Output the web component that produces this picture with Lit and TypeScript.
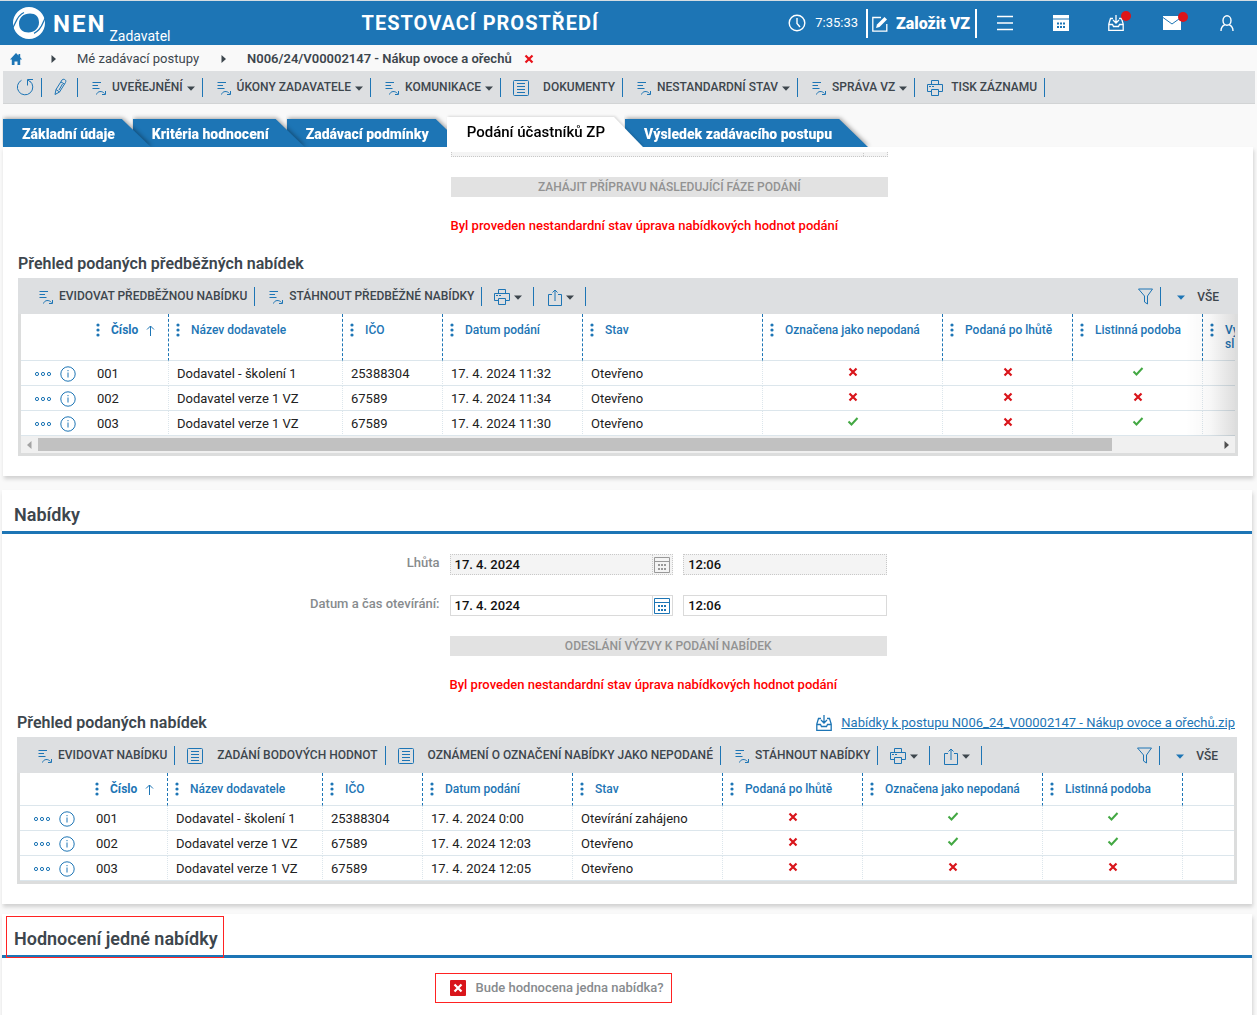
import { LitElement, html, svg, css, nothing } from "lit";
import { customElement, property } from "lit/decorators.js";
import { classMap } from "lit/directives/class-map.js";

type IconName =
  | "process" | "refresh" | "pencil" | "doc" | "printer" | "share" | "filter" | "info" | "dots"
  | "kebab" | "up" | "check" | "cross" | "clock" | "edit" | "menu" | "calendarFull" | "calendar"
  | "inbox" | "mail" | "user" | "home" | "caret" | "right" | "left" | "logo";

const ICONS: Record<IconName, { w: number; h: number; body: unknown }> = {
  process: { w: 14, h: 14, body: svg`<path d="M.5 1.500h8.500M.5 4.500h5.500M.5 7.500h7M4.500 13.500C5.500 10 10 9.500 12.500 12.500M13.500 10v3.500H10" />` },
  refresh: { w: 18, h: 18, body: svg`<path d="M5.500 2.300A7.700 7.700 0 1 0 14 3.200M17 1.500h-5.500v6M12 2l2.500 2" />` },
  pencil: { w: 13, h: 18, body: svg`<path d="M1 16.500l1-5L8 2c1-1.600 5-.5 3.500 2.500L5.500 14zM2 11.500l3.500 2.500M7 4l3.500 2M8.500 6L5 12" />` },
  doc: { w: 16, h: 16, body: svg`<rect x=".5" y=".5" width="15" height="15" rx="1" /><path d="M4 3.500h8M4 6.500h8M4 9.500h8M4 12.500h8" />` },
  printer: { w: 16, h: 16, body: svg`<path d="M4.500 4.500v-4h7v4M4 11.500H.5v-7h15v7H12M4.500 9.500h7v6h-7zM2 6.500h2M5 6.500h2" />` },
  share: { w: 14, h: 17, body: svg`<path d="M4 5.500H.5v11h13v-11H10M7 12V1M4.500 3.500L7 1l2.500 2.500" />` },
  filter: { w: 15, h: 17, body: svg`<path d="M.5 1h14L9.500 8v8l-3-2V8z" />` },
  info: { w: 16, h: 16, body: svg`<circle cx="8" cy="8" r="7.200" /><path d="M8 6.500v5M8 4v1.200" />` },
  dots: { w: 18, h: 6, body: svg`<circle cx="3" cy="3" r="1.600" /><circle cx="9" cy="3" r="1.600" /><circle cx="15" cy="3" r="1.600" />` },
  kebab: { w: 4, h: 14, body: svg`<g fill="currentColor" stroke="none"><circle cx="2" cy="2" r="1.600" /><circle cx="2" cy="7" r="1.600" /><circle cx="2" cy="12" r="1.600" /></g>` },
  up: { w: 9, h: 11, body: svg`<path d="M4.500 11V1M1 4.500L4.500 1 8 4.500" />` },
  check: { w: 12, h: 9, body: svg`<path stroke-width="2" d="M1.500 4.500l3 3L10.500 1" />` },
  cross: { w: 10, h: 10, body: svg`<path stroke-width="2.200" d="M1.500 1.500l7 7M8.500 1.500l-7 7" />` },
  clock: { w: 18, h: 18, body: svg`<circle cx="9" cy="9" r="7.800" stroke-width="1.400" /><path stroke-width="1.400" d="M9 4v5.500l3 3.500" />` },
  edit: { w: 16, h: 16, body: svg`<path stroke-width="1.300" d="M9 1.500H.8v13.700h14V8" /><path fill="currentColor" stroke="none" d="M4 12l1-3.500L12.500 1 15 3.500 7.500 11z" />` },
  menu: { w: 18, h: 16, body: svg`<path stroke-width="1.500" d="M1 1.500h16M1 8h16M1 14.500h16" />` },
  calendarFull: { w: 16, h: 16, body: svg`<path fill="currentColor" stroke="none" d="M0 0h16v3.500H0zM0 4.500h16V16H0z" /><path class="holes" stroke-width="2" d="M4 8.500h2M7 8.500h2M10 8.500h2M4 12h2M7 12h2M10 12h2" />` },
  calendar: { w: 16, h: 16, body: svg`<path d="M.5.500h15v15H.5zM.5 4.500h15" /><path stroke-width="2" stroke-dasharray="2 1" d="M4 8h8M4 12h8" />` },
  inbox: { w: 16, h: 16, body: svg`<path stroke-width="1.300" d="M5 3.500H2.500L.8 9v6.300h14.400V9l-1.700-5.500H11M.8 9.500h3.700l1 2h5l1-2h3.700M8 0v7.500M5 5l3 3 3-3" />` },
  mail: { w: 18, h: 14, body: svg`<path fill="currentColor" stroke="none" d="M0 0h18v14H0z" /><path class="holes" d="M0 1.500l9 6.500 9-6.500" />` },
  user: { w: 14, h: 16, body: svg`<ellipse cx="7" cy="5.500" rx="4" ry="4.800" stroke-width="1.400" /><path stroke-width="1.400" d="M1 16c0-4 2-5.500 4-6.300M13 16c0-4-2-5.500-4-6.300" />` },
  home: { w: 12, h: 12, body: svg`<path fill="currentColor" stroke="none" d="M6 0l2.500 2.500V1h1.700v3.200L12 6.500h-1.800V12H7.500V8.500h-3V12H1.800V6.500H0z" />` },
  caret: { w: 8, h: 5, body: svg`<path fill="currentColor" stroke="none" d="M0 .5h8L4 4.800z" />` },
  right: { w: 5, h: 8, body: svg`<path fill="currentColor" stroke="none" d="M.5 0v8L5 4z" />` },
  left: { w: 5, h: 8, body: svg`<path fill="currentColor" stroke="none" d="M4.500 0v8L0 4z" />` },
  logo: { w: 32, h: 32, body: svg`<path fill="currentColor" stroke="none" fill-rule="evenodd" d="M16 0a16 16 0 1 1 0 32 16 16 0 0 1 0-32zM17 6.500C10.500 6.500 6 10.500 6 16.500S10 25.500 15.500 25.500 26 21.500 26 15.500 22.500 6.500 17 6.500z" /><path class="holes" stroke-width="1.300" d="M-.5 21C3 17 3 9 11 5.500M32.500 10.500C29.500 15 29.500 22.500 21 26.300" />` },
};

@customElement("nen-icon")
export class NenIcon extends LitElement {
  @property() name: IconName = "doc";
  static styles = css`
    :host { display: inline-flex; flex: none; }
    .glyph { display: block; fill: none; stroke: currentColor; overflow: visible; }
    .holes { stroke: #1d75b5; }
  `;
  render() {
    const { w, h, body } = ICONS[this.name];
    return html`<svg class="glyph" width=${w} height=${h} viewBox="0 0 ${w} ${h}" aria-hidden="true">${body}</svg>`;
  }
}

interface Tool { icon: IconName; label?: string; menu?: boolean; hint?: string }

@customElement("nen-tools")
export class NenTools extends LitElement {
  @property({ attribute: false }) tools: Tool[] = [];
  static styles = css`
    :host { display: flex; align-items: center; height: 100%; font-family: Roboto, "Liberation Sans", sans-serif; }
    .tool {
      display: flex; align-items: center; height: 19px; border: 0; border-right: 1px solid #1d75b5;
      background: none; padding: 0 7px 0 14px; font: 500 12px/18px Roboto, "Liberation Sans", sans-serif;
      color: #3d464d; text-transform: uppercase; white-space: nowrap; cursor: pointer;
    }
    .tool.wide { padding-left: 12px; }
    .tool.bare.menu { padding-right: 11px; }
    .glyph { color: #1d75b5; padding-top: 2px; }
    .label { padding: 0 0 0 6px; }
    .label.doc { padding-left: 14px; }
    .label.printer { padding-left: 8px; }
    .caret { margin-left: 4px; padding-top: 2px; }
  `;
  render() {
    return this.tools.map((t) => html`
      <button class=${classMap({ tool: true, wide: t.icon === "doc" || t.icon === "printer", bare: !t.label, menu: !!t.menu })} aria-label=${t.hint ?? nothing}>
        <nen-icon class="glyph" name=${t.icon}></nen-icon>
        ${t.label ? html`<span class="label ${t.icon}">${t.label}</span>` : nothing}
        ${t.menu ? html`<nen-icon class="caret" name="caret"></nen-icon>` : nothing}
      </button>`);
  }
}

interface Column { label: string; width?: number; sorted?: boolean; flag?: boolean }

@customElement("nen-grid")
export class NenGrid extends LitElement {
  @property({ attribute: false }) tools: Tool[] = [];
  @property({ attribute: false }) columns: Column[] = [];
  @property({ attribute: false }) rows: (string | boolean)[][] = [];
  @property({ type: Boolean }) scrolling = false;
  static styles = css`
    :host { display: block; font: 13px/18px Roboto, "Liberation Sans", sans-serif; color: #222; }
    .bar { display: flex; height: 36px; background: #dddfe1; justify-content: space-between; padding: 0 19px 0 7px; }
    .view { display: flex; align-items: center; }
    .iconbtn { border: 0; background: none; padding: 0; color: #1d75b5; display: flex; cursor: pointer; }
    .funnel { padding-right: 7px; height: 19px; align-items: center; border-right: 1px solid #1d75b5; }
    .all { border: 0; background: none; display: flex; align-items: center; padding: 2px 0 0 16px; gap: 12px; color: #1d75b5; font: 500 12px/18px Roboto, "Liberation Sans", sans-serif; cursor: pointer; }
    .word { color: #3d464d; }
    .frame { border: 3px solid #dcdddd; border-top: 0; background: #fff; position: relative; }
    .clip { overflow: hidden; }
    .table { border-collapse: separate; border-spacing: 0; table-layout: fixed; width: 100%; }
    .acts { width: 68px; }
    .head { height: 32px; padding: 0; vertical-align: top; text-align: left; border-bottom: 1px solid #dce6ec; font: 500 12px/14px Roboto, "Liberation Sans", sans-serif; color: #1d75b5; white-space: nowrap; overflow: hidden; }
    .tall .head { height: 46px; }
    .line { border-right: 1px dashed #1d75b5; }
    .title { display: flex; padding: 9px 0 0 7px; gap: 11px; }
    .sorted { font-weight: 700; }
    .arrow { padding-top: 2px; margin-left: -3px; }
    .more { white-space: pre-line; }
    .cell { box-sizing: border-box; height: 25px; padding: 2px 0 0 8px; border-bottom: 1px solid #dce6ec; white-space: nowrap; }
    .cell.edge { border-right: 1px dotted #dce6ec; }
    .cell.flag { padding: 0; text-align: center; }
    .mark { display: flex; justify-content: center; padding-bottom: 3px; color: #d9151b; }
    .mark.yes { color: #43a843; }
    .pair { display: flex; align-items: center; gap: 8px; padding-left: 5px; }
    .fade { position: absolute; right: 0; top: 0; width: 50px; bottom: 17px; background: linear-gradient(to right, rgba(0, 0, 0, 0), rgba(0, 0, 0, .03) 50%, rgba(0, 0, 0, .13)); }
    .scroll { display: flex; align-items: center; height: 17px; background: #f0f0f0; color: #505050; padding: 0 6px; justify-content: space-between; }
    .track { flex: 1; margin: 0 6px; height: 13px; }
    .thumb { width: 91%; height: 13px; background: #c1c1c1; }
    .dim { color: #a3a3a3; }
  `;
  render() {
    const cols = this.columns;
    return html`
      <div class="bar">
        <nen-tools .tools=${this.tools}></nen-tools>
        <div class="view">
          <button class="iconbtn funnel" aria-label="Filtr"><nen-icon name="filter"></nen-icon></button>
          <button class="all"><nen-icon name="caret"></nen-icon><span class="word">VŠE</span></button>
        </div>
      </div>
      <div class="frame">
        <div class="clip">
          <table class=${classMap({ table: true, tall: this.scrolling })}>
            <colgroup>
              <col class="acts" />
              ${cols.map((c) => html`<col style=${c.width ? `width:${c.width}px` : ""} />`)}
            </colgroup>
            <thead>
              <tr>
                <th class="head"></th>
                ${cols.map((c, i) => html`<th scope="col" class=${classMap({ head: true, line: i < cols.length - 1, sorted: !!c.sorted })}>
                  ${c.label ? html`<div class="title"><nen-icon name="kebab"></nen-icon><span class="more">${c.label}</span>${c.sorted ? html`<nen-icon class="arrow" name="up"></nen-icon>` : nothing}</div>` : nothing}
                </th>`)}
              </tr>
            </thead>
            <tbody>
              ${this.rows.map((r) => html`<tr>
                <td class="cell"><div class="pair">
                  <button class="iconbtn" aria-label="Akce"><nen-icon name="dots"></nen-icon></button>
                  <button class="iconbtn" aria-label="Informace"><nen-icon name="info"></nen-icon></button>
                </div></td>
                ${cols.map((c, i) => {
                  const v = r[i];
                  return html`<td class=${classMap({ cell: true, edge: i < cols.length - 1, flag: !!c.flag })}>${
                    typeof v === "boolean"
                      ? html`<div class=${classMap({ mark: true, yes: v })} role="img" aria-label=${v ? "Ano" : "Ne"}><nen-icon name=${v ? "check" : "cross"}></nen-icon></div>`
                      : v ?? nothing}</td>`;
                })}
              </tr>`)}
            </tbody>
          </table>
        </div>
        ${this.scrolling ? html`
          <div class="fade"></div>
          <div class="scroll"><nen-icon class="dim" name="left"></nen-icon><div class="track"><div class="thumb"></div></div><nen-icon name="right"></nen-icon></div>` : nothing}
      </div>`;
  }
}

const MAIN_TOOLS: Tool[] = [
  { icon: "process", label: "Uveřejnění", menu: true },
  { icon: "process", label: "Úkony zadavatele", menu: true },
  { icon: "process", label: "Komunikace", menu: true },
  { icon: "doc", label: "Dokumenty" },
  { icon: "process", label: "Nestandardní stav", menu: true },
  { icon: "process", label: "Správa VZ", menu: true },
  { icon: "printer", label: "Tisk záznamu" },
];
const OUTPUT_TOOLS: Tool[] = [
  { icon: "printer", menu: true, hint: "Tisk" },
  { icon: "share", menu: true, hint: "Export" },
];
const PRELIM_TOOLS: Tool[] = [
  { icon: "process", label: "Evidovat předběžnou nabídku" },
  { icon: "process", label: "Stáhnout předběžné nabídky" },
  ...OUTPUT_TOOLS,
];
const OFFER_TOOLS: Tool[] = [
  { icon: "process", label: "Evidovat nabídku" },
  { icon: "doc", label: "Zadání bodových hodnot" },
  { icon: "doc", label: "Oznámení o označení nabídky jako nepodané" },
  { icon: "process", label: "Stáhnout nabídky" },
  ...OUTPUT_TOOLS,
];
const PRELIM_COLUMNS: Column[] = [
  { label: "Číslo", width: 80, sorted: true },
  { label: "Název dodavatele", width: 174 },
  { label: "IČO", width: 100 },
  { label: "Datum podání", width: 140 },
  { label: "Stav", width: 180 },
  { label: "Označena jako nepodaná", width: 180, flag: true },
  { label: "Podaná po lhůtě", width: 130, flag: true },
  { label: "Listinná podoba", width: 130, flag: true },
  { label: "Vy\nsl" },
];
const PRELIM_ROWS = [
  ["001", "Dodavatel - školení 1", "25388304", "17. 4. 2024 11:32", "Otevřeno", false, false, true],
  ["002", "Dodavatel verze 1 VZ", "67589", "17. 4. 2024 11:34", "Otevřeno", false, false, false],
  ["003", "Dodavatel verze 1 VZ", "67589", "17. 4. 2024 11:30", "Otevřeno", true, false, true],
];
const OFFER_COLUMNS: Column[] = [
  { label: "Číslo", width: 80, sorted: true },
  { label: "Název dodavatele", width: 155 },
  { label: "IČO", width: 100 },
  { label: "Datum podání", width: 150 },
  { label: "Stav", width: 150 },
  { label: "Podaná po lhůtě", width: 140, flag: true },
  { label: "Označena jako nepodaná", width: 180, flag: true },
  { label: "Listinná podoba", width: 140, flag: true },
  { label: "" },
];
const OFFER_ROWS = [
  ["001", "Dodavatel - školení 1", "25388304", "17. 4. 2024 0:00", "Otevírání zahájeno", false, true, true],
  ["002", "Dodavatel verze 1 VZ", "67589", "17. 4. 2024 12:03", "Otevřeno", false, true, true],
  ["003", "Dodavatel verze 1 VZ", "67589", "17. 4. 2024 12:05", "Otevřeno", false, false, false],
];
const TABS = ["Základní údaje", "Kritéria hodnocení", "Zadávací podmínky", "Podání účastníků ZP", "Výsledek zadávacího postupu"];

@customElement("app-root")
export class AppRoot extends LitElement {
  static styles = css`
    :host {
      display: flex; flex-direction: column; min-height: 100vh; box-sizing: border-box; background: #f9f9f9;
      font: 13px/18px Roboto, "Liberation Sans", sans-serif; color: #3d464d; overflow: hidden;
    }
    .top { display: flex; align-items: center; height: 44px; border-top: 1px solid #d5dde2; background: #1d75b5; color: #fff; padding: 0 23px 0 13px; }
    .brand { display: flex; align-items: center; color: #fff; text-decoration: none; }
    .name { font: 700 24px/28px Roboto, "Liberation Sans", sans-serif; letter-spacing: 2px; padding: 2px 3px 0 8px; }
    .role { font-size: 14px; line-height: 18px; padding-top: 26px; }
    .env { font: 700 20px/24px Roboto, "Liberation Sans", sans-serif; letter-spacing: 1px; margin: 0 auto 0 191px; }
    .clock { display: flex; align-items: center; gap: 9px; padding-right: 8px; }
    .create { display: flex; align-items: center; gap: 8px; height: 29px; padding: 1px 5px 0 4px; border: solid #fff; border-width: 0 2px; background: none; color: #fff; font: 900 16px/20px Roboto, "Liberation Sans", sans-serif; cursor: pointer; }
    .quick { display: flex; align-items: center; gap: 39px; padding-left: 19px; }
    .round { position: relative; display: flex; border: 0; background: none; padding: 0; color: #fff; cursor: pointer; }
    .badge::after { content: ""; position: absolute; right: -7px; top: -4px; width: 10px; height: 10px; border-radius: 50%; background: #dd1418; }
    .crumbs { display: flex; align-items: center; height: 25px; padding: 1px 0 0 10px; }
    .home { color: #1d75b5; display: flex; }
    .crumb { color: #3d464d; text-decoration: none; padding-left: 21px; }
    .sep { padding-left: 29px; }
    .sep.next { padding-left: 22px; }
    .here { font-weight: 600; }
    .drop { display: flex; border: 0; background: none; color: #e8121a; padding: 0 0 0 12px; cursor: pointer; }
    .tools { display: flex; align-items: center; height: 32px; background: #dddfe1; border-bottom: 1px solid #d2d4d5; margin: 0 2px 0 3px; }
    .small { display: flex; align-items: center; height: 19px; color: #1d75b5; border: 0; border-right: 1px solid #1d75b5; background: none; padding: 0 7px 0 13px; cursor: pointer; }
    .small.slim { padding: 0 10px 0 12px; }
    .tabs { display: flex; align-items: flex-end; padding: 13px 0 0 3px; margin: 0; height: 30px; list-style: none; }
    .tab { margin-right: -18px; filter: drop-shadow(1px -1px 2px rgba(0, 0, 0, .35)); clip-path: inset(-6px -8px 0 -1px); }
    .tab:nth-child(1) { z-index: 5; } .tab:nth-child(2) { z-index: 4; } .tab:nth-child(3) { z-index: 3; } .tab:nth-child(5) { z-index: 2; }
    .tab.on { z-index: 6; filter: drop-shadow(1px -1px 1px rgba(0, 0, 0, .12)); }
    .tabbtn { display: block; border: 0; height: 28px; padding: 2px 36px 0 19px; color: #fff; background: #1d75b5; font: 900 14px/18px Roboto, "Liberation Sans", sans-serif; clip-path: polygon(0 0, calc(100% - 29px) 0, 100% 100%, 0 100%); white-space: nowrap; cursor: pointer; }
    .on .tabbtn { height: 30px; padding: 0 38px 0 20px; background: #fff; color: #000; font-size: 15px; font-weight: 500; }
    .section { background: #fff; margin: 0 5px 10px 2px; padding: 0 15px 20px; box-shadow: 1px 3px 4px rgba(0, 0, 0, .16); }
    .section.first { margin: 0 4px 14px 3px; padding-top: 5px; }
    .section.last { flex: 1; margin-bottom: 0; }
    .h2 { margin: 0 -15px 20px; padding: 13px 12px 4px; border-bottom: 3px solid #1d75b5; font: 600 18px/24px Roboto, "Liberation Sans", sans-serif; }
    .h3 { margin: 0; font: 600 16px/20px Roboto, "Liberation Sans", sans-serif; }
    .line { display: flex; justify-content: space-between; align-items: center; padding-bottom: 4px; }
    .files { display: flex; align-items: center; gap: 9px; color: #1d75b5; padding-right: 2px; }
    .file { color: #1d75b5; }
    .form { display: grid; grid-template-columns: 35% 35%; gap: 20px 10px; margin: 0 -15px; padding-bottom: 19px; }
    .form.cut { overflow: hidden; }
    .form.cut .field { margin-top: -16px; }
    .label { color: #878b8e; font-weight: 500; text-align: right; }
    .fields { display: flex; gap: 10px; }
    .field { display: flex; box-sizing: border-box; height: 21px; border: 1px solid #dadada; background: #fff; flex: 204 1 0; min-width: 0; }
    .field.date { flex-grow: 224; }
    .field.off { border: 1px dotted #c8c8c8; background: #f4f4f4; }
    .input { flex: 1; min-width: 0; border: 0; padding: 0 4px; background: none; font: 500 13px/18px Roboto, "Liberation Sans", sans-serif; color: #111; outline: 0; }
    .pick { display: flex; align-items: center; border: 0; border-left: 1px solid #dadada; padding: 0 2px 0 1px; background: none; color: #1d75b5; }
    .off .pick { border-left: 1px dotted #c8c8c8; color: #999; }
    .pick.blank { width: 20px; }
    .wide { grid-column: 2; }
    .action { grid-column: 2; height: 20px; border: 0; padding: 0; background: #e2e2e2; color: #929292; font: 500 12px/20px Roboto, "Liberation Sans", sans-serif; }
    .warn { grid-column: 2; margin: 0; color: #f00; font-weight: 500; line-height: 18px; }
    .ring { position: relative; }
    .ring::after { content: ""; position: absolute; border: 1px solid #f22; inset: -12px -6px -9px -8px; }
    .choice { position: relative; justify-self: start; display: flex; align-items: center; gap: 10px; line-height: 20px; color: #878b8e; font-weight: 500; white-space: nowrap; }
    .choice::after { content: ""; position: absolute; border: 1px solid #f22; inset: -5px -8px -5px -15px; }
    .tick { display: grid; place-items: center; width: 16px; height: 16px; color: #fff; background: #d9151b; border-radius: 1px; }
    .box { appearance: none; margin: 0; width: 16px; height: 16px; grid-area: 1 / 1; }
    .mark { grid-area: 1 / 1; }
  `;

  private dateRow(id: string, label: string, off: boolean) {
    return html`
      <label class="label" for=${id}>${label}</label>
      <div class="fields">
        <div class=${classMap({ field: true, date: true, off })}>
          <input class="input" id=${id} value="17. 4. 2024" ?readonly=${off} />
          <button class="pick" aria-label="Kalendář" ?disabled=${off}><nen-icon name="calendar"></nen-icon></button>
        </div>
        <div class=${classMap({ field: true, off })}><input class="input" aria-label="Čas" value="12:06" ?readonly=${off} /></div>
      </div>`;
  }

  render() {
    return html`
      <header class="top">
        <a class="brand" href="#"><nen-icon name="logo"></nen-icon><span class="name">NEN</span><span class="role">Zadavatel</span></a>
        <span class="env">TESTOVACÍ PROSTŘEDÍ</span>
        <span class="clock"><nen-icon name="clock"></nen-icon>7:35:33</span>
        <button class="create"><nen-icon name="edit"></nen-icon>Založit VZ</button>
        <nav class="quick">
          <button class="round" aria-label="Nabídka"><nen-icon name="menu"></nen-icon></button>
          <button class="round" aria-label="Kalendář"><nen-icon name="calendarFull"></nen-icon></button>
          <button class="round badge" aria-label="Stažené soubory"><nen-icon name="inbox"></nen-icon></button>
          <button class="round badge" aria-label="Zprávy"><nen-icon name="mail"></nen-icon></button>
          <button class="round" aria-label="Uživatel"><nen-icon name="user"></nen-icon></button>
        </nav>
      </header>
      <nav class="crumbs">
        <a class="home" href="#" aria-label="Domů"><nen-icon name="home"></nen-icon></a>
        <nen-icon class="sep" name="right"></nen-icon>
        <a class="crumb" href="#">Mé zadávací postupy</a>
        <nen-icon class="sep next" name="right"></nen-icon>
        <a class="crumb here" href="#">N006/24/V00002147 - Nákup ovoce a ořechů</a>
        <button class="drop" aria-label="Zavřít"><nen-icon name="cross"></nen-icon></button>
      </nav>
      <div class="tools">
        <button class="small" aria-label="Obnovit"><nen-icon name="refresh"></nen-icon></button>
        <button class="small slim" aria-label="Upravit"><nen-icon name="pencil"></nen-icon></button>
        <nen-tools .tools=${MAIN_TOOLS}></nen-tools>
      </div>
      <ul class="tabs">
        ${TABS.map((t, i) => html`<li class=${classMap({ tab: true, on: i === 3 })}><button class="tabbtn">${t}</button></li>`)}
      </ul>
      <section class="section first">
        <div class="form cut">
          <div class="field off wide"><input class="input" aria-label="Lhůta" readonly /><span class="pick blank"></span></div>
          <button class="action" disabled>ZAHÁJIT PŘÍPRAVU NÁSLEDUJÍCÍ FÁZE PODÁNÍ</button>
          <p class="warn">Byl proveden nestandardní stav úprava nabídkových hodnot podání</p>
        </div>
        <div class="line"><h3 class="h3">Přehled podaných předběžných nabídek</h3></div>
        <nen-grid scrolling .tools=${PRELIM_TOOLS} .columns=${PRELIM_COLUMNS} .rows=${PRELIM_ROWS}></nen-grid>
      </section>
      <section class="section">
        <h2 class="h2">Nabídky</h2>
        <div class="form">
          ${this.dateRow("deadline", "Lhůta", true)}
          ${this.dateRow("opening", "Datum a čas otevírání:", false)}
          <button class="action" disabled>ODESLÁNÍ VÝZVY K PODÁNÍ NABÍDEK</button>
          <p class="warn">Byl proveden nestandardní stav úprava nabídkových hodnot podání</p>
        </div>
        <div class="line">
          <h3 class="h3">Přehled podaných nabídek</h3>
          <span class="files"><nen-icon name="inbox"></nen-icon><a class="file" href="#">Nabídky k postupu N006_24_V00002147 - Nákup ovoce a ořechů.zip</a></span>
        </div>
        <nen-grid .tools=${OFFER_TOOLS} .columns=${OFFER_COLUMNS} .rows=${OFFER_ROWS}></nen-grid>
      </section>
      <section class="section last">
        <h2 class="h2"><span class="ring">Hodnocení jedné nabídky</span></h2>
        <div class="form">
          <label class="choice wide">
            <span class="tick"><input class="box" type="checkbox" /><nen-icon class="mark" name="cross"></nen-icon></span>
            Bude hodnocena jedna nabídka?
          </label>
        </div>
      </section>`;
  }
}
